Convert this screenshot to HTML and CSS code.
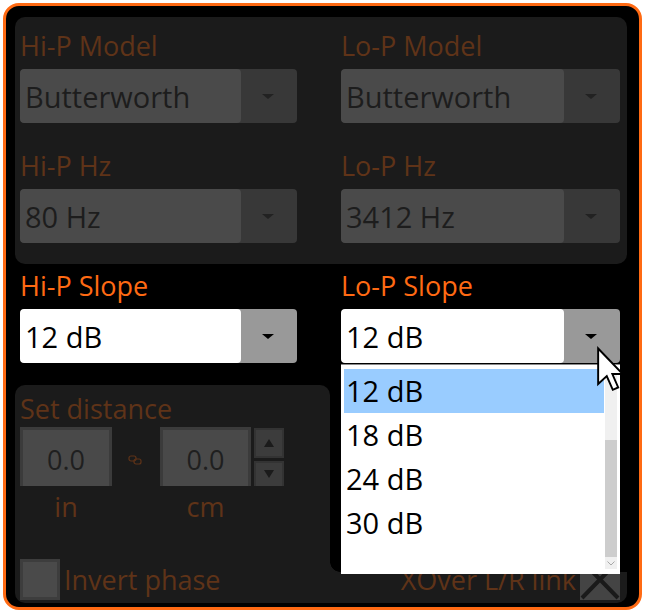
FILE: index.html
```html
<!DOCTYPE html>
<html>
<head>
<meta charset="utf-8">
<link rel="stylesheet" href="styles.css">
</head>
<body>
<div class="frame">
  <section class="panel top">
    <div class="field">
      <div class="label dim">Hi-P Model</div>
      <div class="combo disabled"><div class="value">Butterworth</div><div class="btn"><span class="arrow"></span></div></div>
    </div>
    <div class="field">
      <div class="label dim">Lo-P Model</div>
      <div class="combo disabled"><div class="value">Butterworth</div><div class="btn"><span class="arrow"></span></div></div>
    </div>
    <div class="field">
      <div class="label dim">Hi-P Hz</div>
      <div class="combo disabled"><div class="value">80 Hz</div><div class="btn"><span class="arrow"></span></div></div>
    </div>
    <div class="field">
      <div class="label dim">Lo-P Hz</div>
      <div class="combo disabled"><div class="value">3412 Hz</div><div class="btn"><span class="arrow"></span></div></div>
    </div>
  </section>

  <section class="slopes">
    <div class="field">
      <div class="label bright">Hi-P Slope</div>
      <div class="combo active"><div class="value">12 dB</div><div class="btn"><span class="arrow"></span></div></div>
    </div>
    <div class="field">
      <div class="label bright">Lo-P Slope</div>
      <div class="combo active"><div class="value">12 dB</div><div class="btn"><span class="arrow"></span></div></div>
    </div>
  </section>

  <section class="bottom">
    <div class="panel dist">
      <div class="label dist-label dim">Set distance</div>
      <div class="spin-row">
        <div class="spinbox">0.0</div>
        <div class="link">
          <svg width="14" height="10" viewBox="0 0 14 10"><rect x="1" y="1" width="7" height="5" rx="2" fill="none" stroke="#5f3318" stroke-width="1.2"/><rect x="6" y="4" width="7" height="5" rx="2" fill="none" stroke="#5f3318" stroke-width="1.2"/></svg>
        </div>
        <div class="spinbox">0.0</div>
        <div class="spinners">
          <div class="sbtn"><span class="tri-up"></span></div>
          <div class="sbtn down"><span class="tri-down"></span></div>
        </div>
      </div>
      <div class="units dim"><span>in</span><span></span><span>cm</span></div>
      <div class="check-row">
        <span class="check"></span><span class="check-text dim">Invert phase</span>
      </div>
    </div>
    <div class="xover">
      <span class="check-text dim">XOver L/R link</span>
      <span class="check xcheck">
        <svg width="40" height="41" viewBox="0 0 40 41"><path d="M2 2 L38 39 M38 2 L2 39" stroke="#1a1a1a" stroke-width="4"/></svg>
      </span>
    </div>
  </section>

  <div class="popup">
    <div class="items">
      <div class="item sel">12 dB</div>
      <div class="item">18 dB</div>
      <div class="item">24 dB</div>
      <div class="item">30 dB</div>
    </div>
    <div class="scroll">
      <div class="thumb"></div>
      <div class="scroll-down">
        <svg width="8" height="5" viewBox="0 0 8 5"><path d="M0.5 0.5 L4 4 L7.5 0.5" fill="none" stroke="#a8a8a8" stroke-width="1"/></svg>
      </div>
    </div>
  </div>

  <svg class="cursor" width="28" height="48" viewBox="0 0 13 22">
    <path d="M1 1 L1 17.5 L5 13.8 L7.8 20.2 L10.3 19.1 L7.6 12.9 L12.4 12.9 Z" fill="#fff" stroke="#000" stroke-width="0.9" stroke-linejoin="miter"/>
  </svg>
</div>
</body>
</html>
```

FILE: styles.css
```css
body {
  margin: 0;
  background: #fff;
  font-family: "Open Sans", "Noto Sans", sans-serif;
}

.frame {
  position: relative;
  box-sizing: border-box;
  margin: 3px 0 0 3px;
  width: 639px;
  height: 607px;
  border: 3px solid #ff6a13;
  border-radius: 16px;
  background: #000;
  padding: 11px 12px 0 9px;
  display: flex;
  flex-direction: column;
}

.panel {
  background: #1b1b1b;
  border-radius: 10px;
}

.dim { color: #5f3318; }
.bright { color: #ff6a13; }

.label {
  font-size: 27px;
  line-height: 36px;
  height: 36px;
  margin-bottom: 5px;
  white-space: nowrap;
}

.dist-label {
  margin-bottom: 0;
}

.top {
  height: 247px;
  box-sizing: border-box;
  padding: 11px 0 0 5px;
  display: grid;
  grid-template-columns: 277px 279px;
  column-gap: 44px;
  row-gap: 25px;
  align-content: start;
}

.combo {
  height: 54px;
  display: grid;
  grid-template-columns: 1fr 56px;
  border-radius: 4px;
  overflow: hidden;
}

.combo .value {
  font-size: 29px;
  line-height: 52px;
  padding: 2px 0 0 5px;
  border-radius: 4px;
  white-space: nowrap;
}

.combo.disabled { background: #383838; }
.combo.disabled .value { background: #4a4a4a; color: #1d1d1d; }
.combo.active { background: #999; }
.combo.active .value { background: #fff; color: #000; }

.btn {
  display: flex;
  align-items: center;
  justify-content: center;
}

.arrow {
  width: 0;
  height: 0;
  border-left: 6px solid transparent;
  border-right: 6px solid transparent;
  border-top: 5px solid #000;
  margin-left: -2px;
}

.disabled .arrow { border-top-color: #222; }

.slopes {
  margin-top: 4px;
  padding-left: 5px;
  display: grid;
  grid-template-columns: 277px 279px;
  column-gap: 44px;
}

.bottom {
  margin-top: 22px;
  height: 218px;
  display: grid;
  grid-template-columns: 315px 297px;
  grid-template-rows: 1fr 31px;
}

.dist {
  grid-column: 1;
  grid-row: 1 / 3;
  border-radius: 10px 10px 0 10px;
  padding: 6px 0 3px 5px;
  display: flex;
  flex-direction: column;
}

.spin-row {
  display: grid;
  grid-template-columns: 92px 48px 91px 33px;
  height: 59px;
}

.spinbox {
  box-sizing: border-box;
  background: #494949;
  border: 3px solid #3b3b3b;
  border-bottom: 0;
  text-align: center;
  font-size: 27px;
  line-height: 53px;
  padding-top: 3px;
  color: #1f1f1f;
}

.link {
  display: flex;
  align-items: center;
  justify-content: center;
  padding-top: 7px;
  padding-right: 2px;
}

.spinners {
  display: flex;
  flex-direction: column;
  gap: 3px;
  padding: 1px 0 0 3px;
}

.sbtn {
  box-sizing: border-box;
  height: 30px;
  background: #3c3c3c;
  border: 2px solid #333;
  display: flex;
  align-items: center;
  justify-content: center;
}

.sbtn.down {
  height: 25px;
  border-bottom: 0;
  padding-bottom: 1px;
}

.tri-up {
  width: 0;
  height: 0;
  border-left: 5px solid transparent;
  border-right: 5px solid transparent;
  border-bottom: 8px solid #1b1b1b;
}

.tri-down {
  width: 0;
  height: 0;
  border-left: 5px solid transparent;
  border-right: 5px solid transparent;
  border-top: 8px solid #1b1b1b;
}

.units {
  display: grid;
  grid-template-columns: 92px 48px 91px 33px;
  margin-top: 3px;
  font-size: 27px;
  line-height: 36px;
  text-align: center;
}

.check-row {
  margin-top: auto;
  display: flex;
  align-items: center;
  gap: 4px;
  height: 41px;
}

.check {
  flex: none;
  box-sizing: border-box;
  width: 40px;
  height: 41px;
  background: #4a4a4a;
  border: 3px solid #3d3d3d;
}

.check-text {
  font-size: 27px;
  line-height: 36px;
  white-space: nowrap;
}

.xover {
  grid-column: 2;
  grid-row: 2;
  position: relative;
  background: #1b1b1b;
  border-radius: 0 0 10px 0;
  display: flex;
  justify-content: flex-end;
  align-items: flex-end;
  gap: 4px;
  padding: 0 7px 3px 0;
}

.xover::before {
  content: "";
  position: absolute;
  left: 0;
  top: -10px;
  width: 10px;
  height: 10px;
  background: radial-gradient(circle at 100% 0, transparent 9.5px, #1b1b1b 10px);
}

.xover .check-text {
  margin-bottom: 2px;
}

.xcheck {
  background: #444;
  border: 0;
}

.xcheck svg { display: block; }

.popup {
  position: absolute;
  left: 335px;
  top: 358px;
  width: 279px;
  height: 210px;
  box-sizing: border-box;
  background: #fff;
  border-top: 1px solid #8a8a8a;
  padding: 4px 3px 0 3px;
  display: grid;
  grid-template-columns: 260px 12px;
  column-gap: 1px;
  align-items: start;
}

.items {
  display: flex;
  flex-direction: column;
}

.item {
  height: 44px;
  line-height: 44px;
  font-size: 29px;
  padding-left: 2px;
  color: #000;
}

.item.sel { background: #99ccff; }

.scroll {
  height: 200px;
  background: #f0f0f0;
  display: flex;
  flex-direction: column;
}

.thumb {
  margin-top: 71px;
  height: 117px;
  background: #cdcdcd;
}

.scroll-down {
  height: 12px;
  display: flex;
  align-items: center;
  justify-content: center;
}

.cursor {
  position: absolute;
  left: 590px;
  top: 340px;
}
```
